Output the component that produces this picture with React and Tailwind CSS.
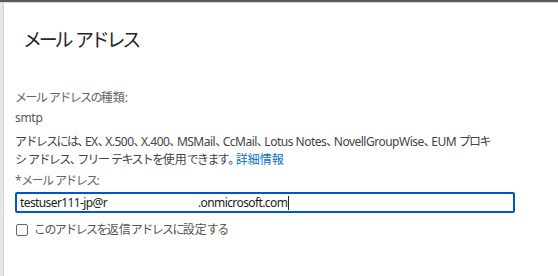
// the reference font has narrow kana and half-width 、。 but full-width kanji,
// so each kind of run gets its own letter spacing
const RUNS = /[\u3001\u3002]+|[\u3040-\u30ff\uff00-\uffef]+|[\u4e00-\u9fff]+|[^\u3001\u3002\u3040-\u30ff\uff00-\uffef\u4e00-\u9fff]+/g

function T({ text, big }) {
  return text.match(RUNS).map((s, i) => {
    let cls = big ? '' : 'tracking-[-0.5px]'
    if (/[\u3001\u3002]/.test(s)) cls = big ? 'tracking-[-7px]' : 'tracking-[-4.5px]'
    else if (/[\u3040-\u30ff\uff00-\uffef]/.test(s)) cls = big ? 'tracking-[-3.3px]' : 'tracking-[-1.6px]'
    else if (/[\u4e00-\u9fff]/.test(s)) cls = ''
    return (
      <span key={i} className={cls}>{s}</span>
    )
  })
}

export default function App() {
  return (
    <div
      className="w-[558px] h-[276px] bg-white flex flex-col overflow-hidden"
      style={{ fontFamily: '"Noto Sans", "Noto Sans CJK JP", sans-serif' }}
    >
      <div className="h-[2px] bg-[#5a5a5a]" />
      <div className="h-[1px] bg-[#d8d8d8]" />
      <div className="flex flex-1">
        <div className="w-[4px] bg-[#e6e6e6] border-r border-[#d4d4d4]" />
        <div className="flex-1 pl-[11px] pr-[43px]">
          <h1 className="pl-[8px] mt-[23px] text-[19px] leading-[28px] text-[#262626]">
            <T text="メール アドレス" big />
          </h1>

          <div className="mt-[35px] text-[12px] leading-[18px] text-[#666]">
            <T text="メール アドレスの種類:" />
          </div>
          <div className="mt-[2px] text-[12px] leading-[18px] text-[#555] tracking-[-0.3px]">smtp</div>
          <p className="mt-[6px] text-[12px] leading-[18px] text-[#444] whitespace-nowrap">
            <T text="アドレスには、EX、X.500、X.400、MSMail、CcMail、Lotus Notes、NovellGroupWise、EUM プロキ" />
            <br />
            <T text="シ アドレス、フリー テキストを使用できます。" />
            <a className="text-[#0072c6]">
              <T text="詳細情報" />
            </a>
          </p>

          <div className="mt-[3px] text-[12px] leading-[18px] text-[#666]">
            <T text="*メール アドレス:" />
          </div>
          <div className="mt-[2px] h-[21px] border-2 border-[#0055d4] rounded-[2px] flex items-center pl-[3px] text-[12px] text-[#222] tracking-[-0.6px]">
            <span className="inline-block w-[178px]">testuser111-jp@r</span>
            <span>.onmicrosoft.com</span>
            <span className="w-[1px] h-[14px] bg-[#222] ml-[1px]" />
          </div>

          <label className="mt-[8px] flex items-center gap-[6px] text-[12px] leading-[18px] text-[#555]">
            <span className="w-[12px] h-[12px] ml-[1px] border border-[#666] rounded-[2px] bg-white" />
            <span>
              <T text="このアドレスを返信アドレスに設定する" />
            </span>
          </label>
        </div>
      </div>
    </div>
  )
}
